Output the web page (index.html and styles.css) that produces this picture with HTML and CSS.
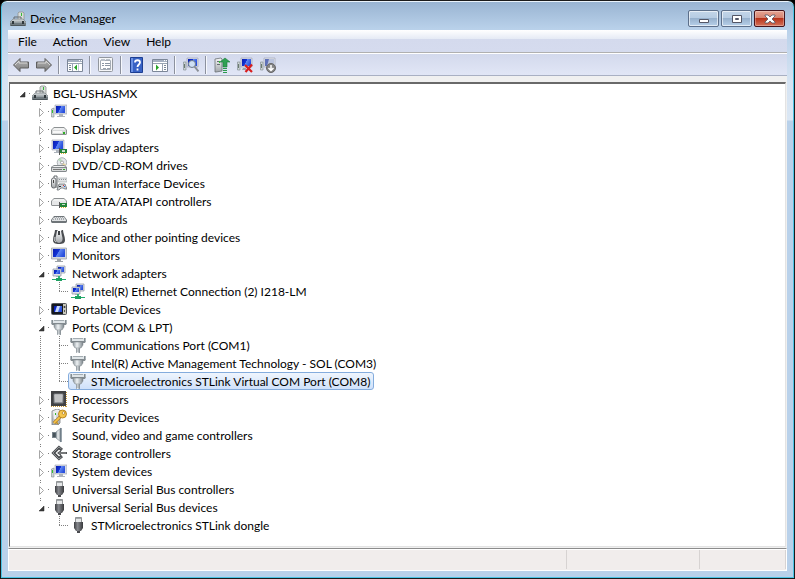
FILE: index.html
```html
<!DOCTYPE html>
<html lang="en">
<head>
    <meta charset="UTF-8">
    <meta name="viewport" content="width=device-width, initial-scale=1.0">
    <title>Device Manager</title>
    <link rel="stylesheet" href="styles.css">
</head>
<body>
    <!-- Icon sprite -->
    <svg class="sprite" width="0" height="0" aria-hidden="true">
        <defs>
            <linearGradient id="g-screen" x1="0" y1="0" x2="1" y2="0.4">
                <stop offset="0" stop-color="#0a1cae"/>
                <stop offset="0.5" stop-color="#1233d6"/>
                <stop offset="0.55" stop-color="#5f87f2"/>
                <stop offset="1" stop-color="#2a50dd"/>
            </linearGradient>
            <linearGradient id="g-metal" x1="0" y1="0" x2="0" y2="1">
                <stop offset="0" stop-color="#f6f7f8"/>
                <stop offset="1" stop-color="#a3a7ab"/>
            </linearGradient>
            <linearGradient id="g-steel" x1="0" y1="0" x2="1" y2="0">
                <stop offset="0" stop-color="#8d969c"/>
                <stop offset="0.4" stop-color="#eef2f4"/>
                <stop offset="1" stop-color="#7d868c"/>
            </linearGradient>
            <linearGradient id="g-dark" x1="0" y1="0" x2="1" y2="0">
                <stop offset="0" stop-color="#3d3e42"/>
                <stop offset="0.4" stop-color="#85878c"/>
                <stop offset="1" stop-color="#38393c"/>
            </linearGradient>
            <linearGradient id="g-arrow" x1="0" y1="0" x2="0" y2="1">
                <stop offset="0" stop-color="#b4b4b4"/>
                <stop offset="1" stop-color="#7e7e7e"/>
            </linearGradient>
        </defs>
        <symbol id="i-manager" viewBox="0 0 16 16">
            <path d="M9 1h4l1 1v7H8V2z" fill="#d9dddb" stroke="#8f9492" stroke-width="0.8"/>
            <path d="M11 2h1v3h-1z" fill="#35bd35"/>
            <path d="M4 8V6h7v2" fill="none" stroke="#666c70"/>
            <path d="M3 8h10l3 3H0z" fill="#c3c9cc" stroke="#777d80" stroke-width="0.6"/>
            <path d="M0 11h16v4H0z" fill="#717b80"/>
            <path d="M0 11h16v1H0z" fill="#98a1a6"/>
            <path d="M2 10h2v3H2zM12 10h2v3h-2z" fill="#30383c"/>
            <path d="M1 14h14v1H1z" fill="#4d565b"/>
        </symbol>
        <symbol id="i-computer" viewBox="0 0 16 16">
            <path d="M0.500 6l2.500-1v9H0.500z" fill="#cfd6d8" stroke="#7c878c" stroke-width="0.6"/>
            <path d="M1 7h1v3H1z" fill="#33c233"/>
            <path d="M4 2h12v9H4z" fill="#d9dde5" stroke="#9aa0b0" stroke-width="0.6"/>
            <path d="M5 3h9v7H5z" fill="url(#g-screen)"/>
            <path d="M8 11h4v2h2v1H6v-1h2z" fill="#aeb4bc"/>
        </symbol>
        <symbol id="i-disk" viewBox="0 0 16 16">
            <path d="M3 6h10l3 3v4l-1 1H1l-1-1V9z" fill="#8d9193"/>
            <path d="M3 7h10l2 2H1z" fill="#f0f1f1"/>
            <path d="M1 9h14v4H1z" fill="#d7d9da"/>
            <path d="M2 10h9v2H2z" fill="#f8f8f8"/>
            <path d="M12 11h2v2h-2z" fill="#2fae25"/>
        </symbol>
        <symbol id="i-display" viewBox="0 0 16 16">
            <path d="M1 1h12v10H1z" fill="#d9dde5" stroke="#9aa0b0" stroke-width="0.6"/>
            <path d="M2 2h10v8H2z" fill="url(#g-screen)"/>
            <path d="M5 11h3v2h2v1H3v-1h2z" fill="#aeb4bc"/>
            <path d="M9 10h7v4H9z" fill="#23853a"/>
            <path d="M11 11h3v2h-3z" fill="#c9dfca"/>
            <path d="M10 14h1v1h-1zM12 14h1v1h-1zM14 14h1v1h-1z" fill="#d9b030"/>
            <path d="M8 9h1v7H8z" fill="#555"/>
        </symbol>
        <symbol id="i-dvd" viewBox="0 0 16 16">
            <circle cx="11" cy="5.500" r="4.800" fill="#e4e7ea" stroke="#8f969b" stroke-width="0.7"/>
            <path d="M11 5.500L7 3a5 5 0 0 1 3-2z" fill="#b7dcb9"/>
            <path d="M11 5.500l4 2a5 5 0 0 1-3 2z" fill="#e7d8a2"/>
            <circle cx="11" cy="5.500" r="1.500" fill="#fff" stroke="#777" stroke-width="0.6"/>
            <path d="M3 8h10l3 2v4l-1 1H1l-1-1v-4z" fill="#84898c"/>
            <path d="M3 9h10l2 1H1z" fill="#f0f1f1"/>
            <path d="M1 11h14v3H1z" fill="#d7d9da"/>
            <path d="M2 12h9v1H2z" fill="#777"/>
            <path d="M12 12h2v1h-2z" fill="#2fae25"/>
        </symbol>
        <symbol id="i-hid" viewBox="0 0 16 16">
            <rect x="0.500" y="3" width="4.500" height="10" rx="2" fill="url(#g-metal)" stroke="#5b6064" stroke-width="0.9"/>
            <path d="M3 3V1h3v12" fill="none" stroke="#62686c"/>
            <path d="M2 5h1v3H2z" fill="#444"/>
            <path d="M7 3h9v4H7z" fill="#e3e5e7" stroke="#a0a5a9" stroke-width="0.6"/>
            <path d="M8 4.500h7" stroke="#8e9397" stroke-dasharray="1 1"/>
            <path d="M8 9h6l2 5h-2l-2-1h-2l-2 2H6z" fill="#cdd2d7" stroke="#5c6266" stroke-width="0.7"/>
            <path d="M8 11h2v1H8z" fill="#333"/>
            <path d="M12 10h1v1h-1z" fill="#d33"/>
            <path d="M13 11h1v1h-1z" fill="#2863d5"/>
        </symbol>
        <symbol id="i-ide" viewBox="0 0 16 16">
            <path d="M3 5h10l3 3v5H1l-1-1V8z" fill="#8d9193"/>
            <path d="M3 6h10l2 2H1z" fill="#f0f1f1"/>
            <path d="M1 8h14v4H1z" fill="#e6e7e8"/>
            <path d="M9 10h7v4H9z" fill="#23853a"/>
            <path d="M11 11h3v1h-3z" fill="#c9dfca"/>
            <path d="M10 14h1v1h-1zM12 14h1v1h-1zM14 14h1v1h-1z" fill="#d9b030"/>
            <path d="M8 9h1v6H8z" fill="#555"/>
        </symbol>
        <symbol id="i-keyboard" viewBox="0 0 16 16">
            <path d="M3 5h10l3 4v2l-1 1H1l-1-1V9z" fill="#6f7579"/>
            <path d="M3 6h10l2 3v1H1V9z" fill="#e0e2e4"/>
            <path d="M3 6.500h10M2 8.500h12" stroke="#a5aaae" stroke-dasharray="1 1"/>
            <path d="M4 7.500h9" stroke="#a5aaae" stroke-dasharray="1 1"/>
        </symbol>
        <symbol id="i-mouse" viewBox="0 0 16 16">
            <path d="M4 1h2l1 1h3l1-1h1c0 3 2 6 2 10 0 3-2 4-6 4s-6-1-6-4c0-4 2-7 2-10z" fill="#4b4e52"/>
            <path d="M6 2h4l1 5c1 3 1 6-3 7-4-1-4-4-3-7z" fill="url(#g-metal)"/>
            <path d="M7 2h2v4H7z" fill="#3c3f43"/>
            <path d="M4 8c-1 2-1 4 1 5" fill="none" stroke="#c7cacd"/>
        </symbol>
        <symbol id="i-monitor" viewBox="0 0 16 16">
            <path d="M0.500 1h15v11h-15z" fill="#d4d7dc" stroke="#9a9fa8" stroke-width="0.7"/>
            <path d="M2 2h12v8H2z" fill="url(#g-screen)"/>
            <path d="M6 12h4v2h2v1H4v-1h2z" fill="#9da3a8"/>
        </symbol>
        <symbol id="i-network" viewBox="0 0 16 16">
            <path d="M6 1h8v7H6z" fill="#dfe3ea" stroke="#8990a0" stroke-width="0.7"/>
            <path d="M7 2h6v5H7z" fill="url(#g-screen)"/>
            <path d="M2 4h8v7H2z" fill="#dfe3ea" stroke="#8990a0" stroke-width="0.7"/>
            <path d="M3 5h6v4H3z" fill="url(#g-screen)"/>
            <path d="M5 11h3v1H5z" fill="#aab0ba"/>
            <path d="M7 11h2v3H7z" fill="#2eb675"/>
            <path d="M1 14h14v1H1z" fill="#23ac6c"/>
            <path d="M5 13h6v3H5z" fill="#1fa062"/>
        </symbol>
        <symbol id="i-portable" viewBox="0 0 16 16">
            <rect x="0.500" y="2.500" width="15" height="11" rx="1" fill="#c8c8bd" stroke="#54575c"/>
            <path d="M1 3h11v10H1z" fill="#14181f"/>
            <path d="M3 5h8v6H3z" fill="url(#g-screen)"/>
            <path d="M6 5h3l-2 6H4z" fill="#c7d7fb"/>
            <circle cx="13.500" cy="6" r="1" fill="#333"/>
            <path d="M13 9h1v2h-1z" fill="#555"/>
        </symbol>
        <symbol id="i-port" viewBox="0 0 16 16">
            <path d="M0 1h16v3l-1 2h-2V5H3v1H1L0 4z" fill="#848c91"/>
            <path d="M2 1h12v3H2z" fill="#dfe5e8"/>
            <path d="M3 1h10v1H3z" fill="#a3acb1"/>
            <path d="M0 1h1v3H0zM15 1h1v3h-1z" fill="#aeb8bd"/>
            <path d="M3 5h10v3l-2 3H5L3 8z" fill="url(#g-steel)" stroke="#788085" stroke-width="0.5"/>
            <path d="M6 11h4v5H6z" fill="url(#g-steel)"/>
            <path d="M6 12h4M6 14h4" stroke="#838b90" stroke-width="0.7"/>
        </symbol>
        <symbol id="i-cpu" viewBox="0 0 16 16">
            <path d="M0 15.500h16M15.500 1v15" stroke="#c99a3a" stroke-dasharray="1 1"/>
            <path d="M0 0h15v15H0z" fill="#414244"/>
            <path d="M3 3h9v9H3z" fill="url(#g-metal)" stroke="#77797c"/>
            <path d="M4 4h7v7H4z" fill="#c2c3c4"/>
        </symbol>
        <symbol id="i-security" viewBox="0 0 16 16">
            <path d="M1 2l5-2 3 1v13l-2 2H1z" fill="url(#g-metal)" stroke="#7b8184" stroke-width="0.8"/>
            <path d="M3 3h2v7H3z" fill="#eef1f1"/>
            <path d="M4 4h1v2H4z" fill="#35b42d"/>
            <path d="M9 8l-6 6" stroke="#a26b08" stroke-width="3"/>
            <path d="M9 8l-6 6" stroke="#f4c34a" stroke-width="1.800"/>
            <circle cx="11.500" cy="5" r="4" fill="#f6c64e" stroke="#a8730d" stroke-width="0.8"/>
            <circle cx="12.500" cy="4" r="1.300" fill="#fff" stroke="#a8730d" stroke-width="0.7"/>
            <path d="M5 13l2 2" stroke="#c58f1d" stroke-width="1.500"/>
        </symbol>
        <symbol id="i-sound" viewBox="0 0 16 16">
            <path d="M1 5h4v6H1z" fill="#78838a"/>
            <path d="M2 6h3v4H2z" fill="#48545c"/>
            <path d="M5 5l5-4v14l-5-4z" fill="url(#g-steel)" stroke="#77838b" stroke-width="0.6"/>
            <path d="M10 1v14" stroke="#5a6c7a"/>
        </symbol>
        <symbol id="i-storage" viewBox="0 0 16 16">
            <path d="M11 5L8 2.500 2.500 8 8 13.500 11 11" fill="none" stroke="#4a4d50" stroke-width="3"/>
            <path d="M10.500 4L8 2 2 8l6 6 2.500-2" fill="none" stroke="#a0a3a6" stroke-width="0.8"/>
            <path d="M6 8l4-3v2h6v2h-6v2z" fill="#55585b"/>
            <path d="M8 8h7" stroke="#999"/>
        </symbol>
        <symbol id="i-usb" viewBox="0 0 16 16">
            <path d="M5.500 0.500h6V6h-6z" fill="#e6e8e9" stroke="#777b7e" stroke-width="0.8"/>
            <path d="M6 1h5v1H6z" fill="#a4a8ab"/>
            <path d="M4 5h9v6l-2 3H6l-2-3z" fill="url(#g-dark)"/>
            <path d="M7 14h3v2H7z" fill="#4a4b4f"/>
        </symbol>
        <!-- Toolbar icons -->
        <symbol id="i-back" viewBox="0 0 16 16">
            <path d="M0.500 8L7 1.500V5h8.500v6H7v3.500z" fill="url(#g-arrow)" stroke="#5f5f5f" stroke-linejoin="round"/>
            <path d="M2 8l4-4v2h8" fill="none" stroke="#d8d8d8"/>
        </symbol>
        <symbol id="i-forward" viewBox="0 0 16 16">
            <path d="M15.500 8L9 1.500V5H0.500v6H9v3.500z" fill="url(#g-arrow)" stroke="#5f5f5f" stroke-linejoin="round"/>
            <path d="M2 6h8V4l4 4" fill="none" stroke="#d8d8d8"/>
        </symbol>
        <symbol id="i-tree" viewBox="0 0 16 16">
            <path d="M0.500 2.500h15v12H0.500z" fill="#fff" stroke="#7c8798"/>
            <path d="M1 3h14v2H1z" fill="#a6b1c2"/>
            <path d="M12 3h1v1h-1zM14 3h1v1h-1z" fill="#fff"/>
            <path d="M1 6.500h14M5.500 7v7" stroke="#98a3b2"/>
            <path d="M2 8.500h2M2 10.500h2M2 12.500h2" stroke="#7b8798"/>
            <path d="M11.500 7v7" stroke="#c3cad4"/>
            <path d="M10 7.500v6L7 10.500z" fill="#28a428"/>
        </symbol>
        <symbol id="i-props" viewBox="0 0 16 16">
            <rect x="0.500" y="0.500" width="14" height="14" rx="1" fill="#f5f6f8" stroke="#92979e"/>
            <path d="M2.500 3.500h10v9h-10z" fill="#fff" stroke="#a5acb5"/>
            <path d="M3 2h4v2H3zM8 2h4v1H8z" fill="#b9c0ca"/>
            <path d="M4 6.500h2M7 6.500h5M4 8.500h2M7 8.500h5" stroke="#8c96a4"/>
            <path d="M5 11h3v1H5zM9 11h3v1H9z" fill="#9aa3af"/>
        </symbol>
        <symbol id="i-help" viewBox="0 0 16 16">
            <path d="M1.500 0.500h12v15h-12z" fill="#3862c5" stroke="#1d3f92"/>
            <path d="M2 1h2v14H2z" fill="#6b91e4"/>
            <path d="M6 5.500c0-3 5-3 5 0 0 2-2.500 2-2.500 4.500M8.500 11.500v2" fill="none" stroke="#fff" stroke-width="1.800"/>
        </symbol>
        <symbol id="i-pane" viewBox="0 0 16 16">
            <path d="M0.500 2.500h15v12H0.500z" fill="#fff" stroke="#7c8798"/>
            <path d="M1 3h14v2H1z" fill="#a6b1c2"/>
            <path d="M12 3h1v1h-1zM14 3h1v1h-1z" fill="#fff"/>
            <path d="M1 6.500h14M10.500 7v7" stroke="#98a3b2"/>
            <path d="M12 8.500h2M12 10.500h2M12 12.500h2" stroke="#7b8798"/>
            <path d="M4 7.500v6l3-3z" fill="#28a428"/>
        </symbol>
        <symbol id="i-scan" viewBox="0 0 16 16">
            <path d="M0.500 5H3v8H0.500z" fill="#cfd6d8" stroke="#7c878c" stroke-width="0.6"/>
            <path d="M1 7h1v4H1z" fill="#6b7b70"/>
            <path d="M4 1h11v9H4z" fill="#d9dde5" stroke="#9aa0b0" stroke-width="0.6"/>
            <path d="M5 2h9v7H5z" fill="url(#g-screen)"/>
            <circle cx="9" cy="7" r="3.500" fill="#cfe0f4" stroke="#707d8c"/>
            <path d="M11.500 9.500l4 5" stroke="#8a8f95" stroke-width="2"/>
        </symbol>
        <symbol id="i-update" viewBox="0 0 16 16">
            <path d="M1 2l6-1 1 1v12l-6 1H1z" fill="url(#g-metal)" stroke="#6b7175" stroke-width="0.8"/>
            <path d="M3 4h3v1H3zM3 7h3v1H3z" fill="#666d71"/>
            <path d="M5 4h1v2H5z" fill="#3cc13c"/>
            <path d="M11 1l5 4h-3v5H9V5H6z" fill="#2fa052" stroke="#1d7c3b" stroke-width="0.6"/>
            <path d="M9 11h4v1H9zM9 13h4v1H9zM9 15h4v1H9z" fill="#2c9a4d"/>
        </symbol>
        <symbol id="i-remove" viewBox="0 0 16 16">
            <path d="M0.500 5H3v8H0.500z" fill="#cfd6d8" stroke="#7c878c" stroke-width="0.6"/>
            <path d="M1 7h1v4H1z" fill="#6b7b70"/>
            <path d="M4 1h11v9H4z" fill="#d9dde5" stroke="#9aa0b0" stroke-width="0.6"/>
            <path d="M5 2h9v7H5z" fill="url(#g-screen)"/>
            <path d="M6 11h3v2H5z" fill="#9da3ab"/>
            <path d="M8 8l7 7M15 7.500L8.500 15" stroke="#d81e1e" stroke-width="2.200"/>
        </symbol>
        <symbol id="i-disable" viewBox="0 0 16 16">
            <path d="M0.500 5H3v8H0.500z" fill="#cfd6d8" stroke="#7c878c" stroke-width="0.6"/>
            <path d="M1 7h1v4H1z" fill="#6b7b70"/>
            <path d="M4 1h11v9H4z" fill="#e2e5ec" stroke="#9aa0b0" stroke-width="0.6"/>
            <path d="M5 2h9v7H5z" fill="#bac3dc"/>
            <path d="M5 2h4L7 9H5z" fill="#5e70b8"/>
            <circle cx="11" cy="11" r="4.500" fill="#858585" stroke="#666"/>
            <path d="M11 8v5M8.500 11l2.500 2.500 2.500-2.500" fill="none" stroke="#fff" stroke-width="1.500"/>
        </symbol>
        <!-- Tree arrows -->
        <symbol id="i-closed" viewBox="0 0 9 10">
            <path d="M2.500 1.500v8l4-4z" fill="#fff" stroke="#a6a6a6"/>
        </symbol>
        <symbol id="i-open" viewBox="0 0 9 10">
            <path d="M7 3v5H2z" fill="#3a3a3a" stroke="#262626" stroke-width="0.5"/>
        </symbol>
    </svg>

    <div class="window">
        <header class="title-bar">
            <svg class="icon"><use href="#i-manager"/></svg>
            <h1>Device Manager</h1>
            <div class="window-buttons">
                <button type="button" aria-label="Minimize">
                    <svg width="12" height="12" viewBox="0 0 12 12"><path d="M1.500 6.500h9v3h-9z" fill="#fff" stroke="#535666"/></svg>
                </button>
                <button type="button" aria-label="Maximize">
                    <svg width="12" height="12" viewBox="0 0 12 12"><path d="M1.500 2.500h9v7h-9z" fill="#fff" stroke="#535666"/><path d="M4.500 5.500h3v1h-3z" fill="#9fb6d0" stroke="#535666"/></svg>
                </button>
                <button type="button" class="close" aria-label="Close">
                    <svg width="12" height="12" viewBox="0 0 12 12"><path d="M1 2h3l2 2 2-2h3v1L8 6l3 3v1H8L6 8l-2 2H1V9l3-3-3-3z" fill="#fff" stroke="#535666" stroke-width="0.8"/></svg>
                </button>
            </div>
        </header>

        <div class="client">
            <nav class="menu-bar">
                <button type="button">File</button>
                <button type="button">Action</button>
                <button type="button">View</button>
                <button type="button">Help</button>
            </nav>

            <div class="toolbar">
                <button type="button" aria-label="Back"><svg class="icon"><use href="#i-back"/></svg></button>
                <button type="button" aria-label="Forward"><svg class="icon"><use href="#i-forward"/></svg></button>
                <span class="separator"></span>
                <button type="button" aria-label="Show or hide console tree"><svg class="icon"><use href="#i-tree"/></svg></button>
                <span class="separator"></span>
                <button type="button" aria-label="Properties"><svg class="icon"><use href="#i-props"/></svg></button>
                <span class="separator"></span>
                <button type="button" aria-label="Help topics"><svg class="icon"><use href="#i-help"/></svg></button>
                <button type="button" aria-label="Show or hide action pane"><svg class="icon"><use href="#i-pane"/></svg></button>
                <span class="separator"></span>
                <button type="button" aria-label="Scan for hardware changes"><svg class="icon"><use href="#i-scan"/></svg></button>
                <span class="separator"></span>
                <button type="button" aria-label="Update driver"><svg class="icon"><use href="#i-update"/></svg></button>
                <button type="button" aria-label="Uninstall"><svg class="icon"><use href="#i-remove"/></svg></button>
                <button type="button" aria-label="Disable"><svg class="icon"><use href="#i-disable"/></svg></button>
            </div>

            <!-- Device tree -->
            <main class="tree-panel">
                <ul class="tree">
                    <li>
                        <div class="row">
                            <button type="button" class="toggle" aria-label="Collapse"><svg><use href="#i-open"/></svg></button>
                            <span class="item"><svg class="icon"><use href="#i-manager"/></svg>BGL-USHASMX</span>
                        </div>
                        <ul>
                            <li>
                                <div class="row">
                                    <button type="button" class="toggle" aria-label="Expand"><svg><use href="#i-closed"/></svg></button>
                                    <span class="item"><svg class="icon"><use href="#i-computer"/></svg>Computer</span>
                                </div>
                            </li>
                            <li>
                                <div class="row">
                                    <button type="button" class="toggle" aria-label="Expand"><svg><use href="#i-closed"/></svg></button>
                                    <span class="item"><svg class="icon"><use href="#i-disk"/></svg>Disk drives</span>
                                </div>
                            </li>
                            <li>
                                <div class="row">
                                    <button type="button" class="toggle" aria-label="Expand"><svg><use href="#i-closed"/></svg></button>
                                    <span class="item"><svg class="icon"><use href="#i-display"/></svg>Display adapters</span>
                                </div>
                            </li>
                            <li>
                                <div class="row">
                                    <button type="button" class="toggle" aria-label="Expand"><svg><use href="#i-closed"/></svg></button>
                                    <span class="item"><svg class="icon"><use href="#i-dvd"/></svg>DVD/CD-ROM drives</span>
                                </div>
                            </li>
                            <li>
                                <div class="row">
                                    <button type="button" class="toggle" aria-label="Expand"><svg><use href="#i-closed"/></svg></button>
                                    <span class="item"><svg class="icon"><use href="#i-hid"/></svg>Human Interface Devices</span>
                                </div>
                            </li>
                            <li>
                                <div class="row">
                                    <button type="button" class="toggle" aria-label="Expand"><svg><use href="#i-closed"/></svg></button>
                                    <span class="item"><svg class="icon"><use href="#i-ide"/></svg>IDE ATA/ATAPI controllers</span>
                                </div>
                            </li>
                            <li>
                                <div class="row">
                                    <button type="button" class="toggle" aria-label="Expand"><svg><use href="#i-closed"/></svg></button>
                                    <span class="item"><svg class="icon"><use href="#i-keyboard"/></svg>Keyboards</span>
                                </div>
                            </li>
                            <li>
                                <div class="row">
                                    <button type="button" class="toggle" aria-label="Expand"><svg><use href="#i-closed"/></svg></button>
                                    <span class="item"><svg class="icon"><use href="#i-mouse"/></svg>Mice and other pointing devices</span>
                                </div>
                            </li>
                            <li>
                                <div class="row">
                                    <button type="button" class="toggle" aria-label="Expand"><svg><use href="#i-closed"/></svg></button>
                                    <span class="item"><svg class="icon"><use href="#i-monitor"/></svg>Monitors</span>
                                </div>
                            </li>
                            <li>
                                <div class="row">
                                    <button type="button" class="toggle" aria-label="Collapse"><svg><use href="#i-open"/></svg></button>
                                    <span class="item"><svg class="icon"><use href="#i-network"/></svg>Network adapters</span>
                                </div>
                                <ul>
                                    <li>
                                        <div class="row leaf">
                                            <span class="item"><svg class="icon"><use href="#i-network"/></svg>Intel(R) Ethernet Connection (2) I218-LM</span>
                                        </div>
                                    </li>
                                </ul>
                            </li>
                            <li>
                                <div class="row">
                                    <button type="button" class="toggle" aria-label="Expand"><svg><use href="#i-closed"/></svg></button>
                                    <span class="item"><svg class="icon"><use href="#i-portable"/></svg>Portable Devices</span>
                                </div>
                            </li>
                            <li>
                                <div class="row">
                                    <button type="button" class="toggle" aria-label="Collapse"><svg><use href="#i-open"/></svg></button>
                                    <span class="item"><svg class="icon"><use href="#i-port"/></svg>Ports (COM &amp; LPT)</span>
                                </div>
                                <ul>
                                    <li>
                                        <div class="row leaf">
                                            <span class="item"><svg class="icon"><use href="#i-port"/></svg>Communications Port (COM1)</span>
                                        </div>
                                    </li>
                                    <li>
                                        <div class="row leaf">
                                            <span class="item"><svg class="icon"><use href="#i-port"/></svg>Intel(R) Active Management Technology - SOL (COM3)</span>
                                        </div>
                                    </li>
                                    <li>
                                        <div class="row leaf">
                                            <span class="item selected"><svg class="icon"><use href="#i-port"/></svg>STMicroelectronics STLink Virtual COM Port (COM8)</span>
                                        </div>
                                    </li>
                                </ul>
                            </li>
                            <li>
                                <div class="row">
                                    <button type="button" class="toggle" aria-label="Expand"><svg><use href="#i-closed"/></svg></button>
                                    <span class="item"><svg class="icon"><use href="#i-cpu"/></svg>Processors</span>
                                </div>
                            </li>
                            <li>
                                <div class="row">
                                    <button type="button" class="toggle" aria-label="Expand"><svg><use href="#i-closed"/></svg></button>
                                    <span class="item"><svg class="icon"><use href="#i-security"/></svg>Security Devices</span>
                                </div>
                            </li>
                            <li>
                                <div class="row">
                                    <button type="button" class="toggle" aria-label="Expand"><svg><use href="#i-closed"/></svg></button>
                                    <span class="item"><svg class="icon"><use href="#i-sound"/></svg>Sound, video and game controllers</span>
                                </div>
                            </li>
                            <li>
                                <div class="row">
                                    <button type="button" class="toggle" aria-label="Expand"><svg><use href="#i-closed"/></svg></button>
                                    <span class="item"><svg class="icon"><use href="#i-storage"/></svg>Storage controllers</span>
                                </div>
                            </li>
                            <li>
                                <div class="row">
                                    <button type="button" class="toggle" aria-label="Expand"><svg><use href="#i-closed"/></svg></button>
                                    <span class="item"><svg class="icon"><use href="#i-computer"/></svg>System devices</span>
                                </div>
                            </li>
                            <li>
                                <div class="row">
                                    <button type="button" class="toggle" aria-label="Expand"><svg><use href="#i-closed"/></svg></button>
                                    <span class="item"><svg class="icon"><use href="#i-usb"/></svg>Universal Serial Bus controllers</span>
                                </div>
                            </li>
                            <li>
                                <div class="row">
                                    <button type="button" class="toggle" aria-label="Collapse"><svg><use href="#i-open"/></svg></button>
                                    <span class="item"><svg class="icon"><use href="#i-usb"/></svg>Universal Serial Bus devices</span>
                                </div>
                                <ul>
                                    <li>
                                        <div class="row leaf">
                                            <span class="item"><svg class="icon"><use href="#i-usb"/></svg>STMicroelectronics STLink dongle</span>
                                        </div>
                                    </li>
                                </ul>
                            </li>
                        </ul>
                    </li>
                </ul>
            </main>

            <footer class="status-bar">
                <div class="status-main"></div>
                <div class="status-wide"></div>
                <div class="status-end"></div>
            </footer>
        </div>
    </div>
</body>
</html>
```
FILE: styles.css
```css
* {
    box-sizing: border-box;
}
body {
    margin: 0;
    background-color: #000;
    font-family: Lato, "Segoe UI", sans-serif;
    font-size: 12px;
    color: #000;
}
button {
    font: inherit;
    color: inherit;
    background: none;
    border: none;
    padding: 0;
}
svg {
    display: block;
}
.sprite {
    position: absolute;
}
.icon {
    width: 16px;
    height: 16px;
    flex-shrink: 0;
}
/* Window frame */
.window {
    display: flex;
    flex-direction: column;
    min-height: 100vh;
    padding: 0 7px 7px;
    border: 1px solid #1b1b1b;
    border-radius: 7px 7px 0 0;
    box-shadow: inset 0 2px 0 -1px #eaf3fb, inset 0 0 0 1px #4cc3e4;
    background: linear-gradient(#98b3d1 0, #b9d1ea 28px, #d5e3f2 80px, #dbe7f4 119px, #b9d1ea 120px);
    background-clip: padding-box;
}
.title-bar {
    display: flex;
    align-items: center;
    height: 29px;
    padding: 6px 2px 0 2px;
}
.title-bar h1 {
    flex: 1;
    margin: 0 0 0 4px;
    font-size: 12px;
    font-weight: normal;
}
.window-buttons {
    display: flex;
    gap: 2px;
}
.window-buttons button {
    display: flex;
    align-items: center;
    justify-content: center;
    width: 31px;
    height: 17px;
    border: 1px solid #5c6f8a;
    border-radius: 2px;
    box-shadow: inset 0 0 0 1px rgba(255, 255, 255, 0.6);
    background: linear-gradient(#c3d5e8 0, #b5cbe2 50%, #97b1cd 50%, #b7d0e9 100%);
}
.window-buttons .close {
    border-color: #46141c;
    box-shadow: inset 0 0 0 1px rgba(255, 255, 255, 0.3);
    background: linear-gradient(#e6a493 0, #d4806e 50%, #b8331b 50%, #d5725a 100%);
}
/* Client area */
.client {
    display: flex;
    flex-direction: column;
    flex: 1;
    background-color: #f0f0f0;
}
.menu-bar {
    display: flex;
    height: 23px;
    padding: 0 4px;
    border-bottom: 1px solid #b0b0b0;
    background: linear-gradient(#fff 0, #e5eaf5 9px, #d4daed 9px, #d5dbee 100%);
}
.menu-bar button {
    padding: 0 6px;
    margin-right: 4px;
}
.toolbar {
    display: flex;
    align-items: center;
    height: 23px;
    padding: 0 1px;
    border-top: 1px solid #fff;
    border-bottom: 1px solid #a9b0c3;
    background: linear-gradient(#d3d9ec, #e1e6f6);
}
.toolbar button {
    display: flex;
    align-items: center;
    justify-content: center;
    width: 23px;
    height: 20px;
}
.separator {
    width: 2px;
    height: 18px;
    margin: 0 3px;
    border-left: 1px solid #8c919e;
    border-right: 1px solid #f6f8fd;
}
/* Tree */
.tree-panel {
    flex: 1;
    margin: 6px 1px 1px;
    padding: 0 4px;
    border-style: solid;
    border-width: 2px 1px 1px 1px;
    border-color: #696969 #e3e3e3 #e3e3e3 #696969;
    background-color: #fff;
}
.tree,
.tree ul {
    list-style: none;
    margin: 0;
    padding: 0;
}
.tree ul {
    padding-left: 19px;
}
/* Dotted vertical connector, ends at the middle of the last entry */
.tree ul > li {
    background: repeating-linear-gradient(#808080 0 1px, transparent 1px 2px) 7px 0 / 1px 100% no-repeat;
}
.tree ul > li:last-child {
    background-size: 1px 9px;
}
.row {
    display: flex;
    align-items: center;
    height: 18px;
    background: repeating-linear-gradient(90deg, #808080 0 1px, transparent 1px 2px) 7px 9px / 10px 1px no-repeat;
}
.row.leaf {
    padding-left: 16px;
}
.toggle {
    width: 13px;
    height: 14px;
    margin: 2px 1px 0 2px;
    background-color: #fff;
}
.toggle svg {
    width: 9px;
    height: 10px;
    margin: 0 auto 0 2px;
}
.item {
    display: flex;
    align-items: center;
    gap: 5px;
    height: 18px;
    padding: 0 3px 0 1px;
    border: 1px solid transparent;
    border-radius: 3px;
    white-space: nowrap;
}
.item.selected {
    border-color: #84acdd;
    background: linear-gradient(#eff5fd, #cfe1fa);
}
/* Status bar */
.status-bar {
    display: flex;
    height: 23px;
    padding: 1px 0 1px 1px;
    border-top: 1px solid #8c8c8c;
    border-right: 1px solid #fff;
    border-left: 1px solid #fff;
    border-bottom: 1px solid #fff;
    background-color: #f1edec;
    box-shadow: inset 0 1px 0 #fff;
}
.status-bar div {
    border-right: 1px solid #d7d3d2;
}
.status-main {
    flex: 1;
}
.status-wide {
    width: 133px;
}
.status-end {
    width: 86px;
}
```
